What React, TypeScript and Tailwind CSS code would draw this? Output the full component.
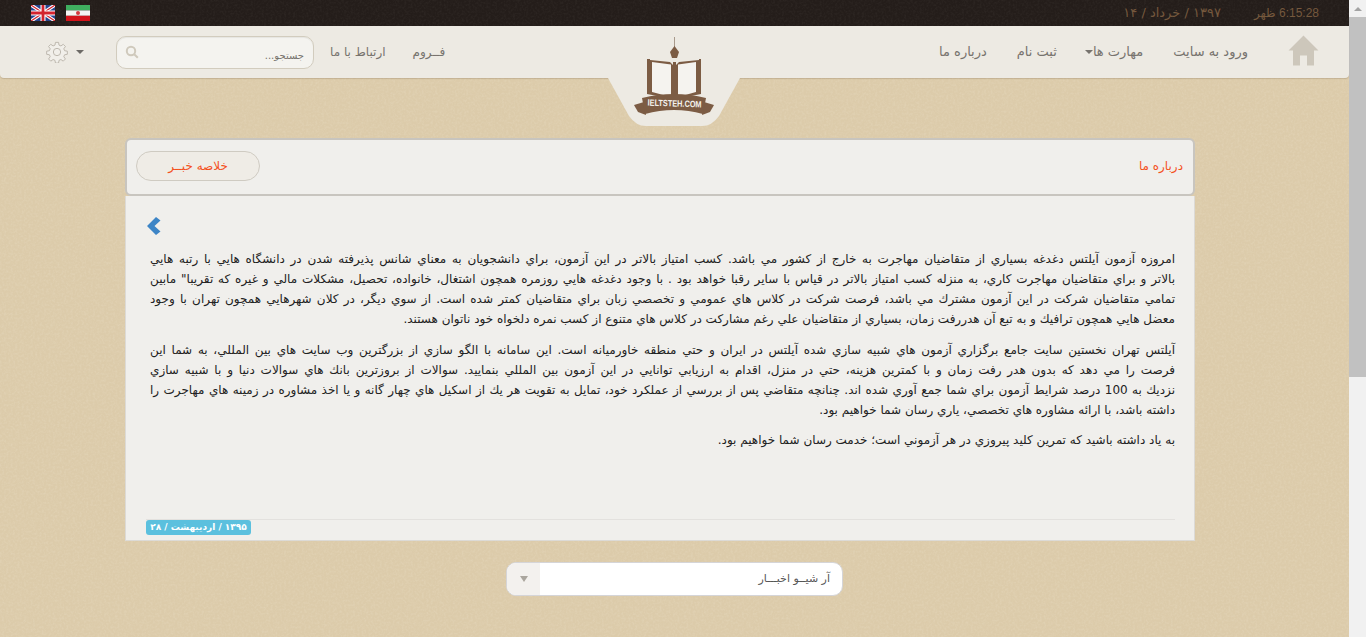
const paragraphs = [
  [
    "امروزه آزمون آیلتس دغدغه بسیاري از متقاضیان مهاجرت به خارج از کشور مي باشد. کسب امتیاز بالاتر در این آزمون، براي دانشجویان به معناي شانس پذیرفته شدن در دانشگاه هایي با رتبه هایي",
    "بالاتر و براي متقاضیان مهاجرت کاري، به منزله کسب امتیاز بالاتر در قیاس با سایر رقبا خواهد بود . با وجود دغدغه هایي روزمره همچون اشتغال، خانواده، تحصیل، مشکلات مالي و غیره که تقریبا\" مابین",
    "تمامي متقاضیان شرکت در این آزمون مشترك مي باشد، فرصت شرکت در کلاس هاي عمومي و تخصصي زبان براي متقاضیان کمتر شده است. از سوي دیگر، در کلان شهرهایي همچون تهران با وجود",
    "معضل هایي همچون ترافیك و به تبع آن هدررفت زمان، بسیاري از متقاضیان علي رغم مشارکت در کلاس هاي متنوع از کسب نمره دلخواه خود ناتوان هستند.",
  ],
  [
    "آیلتس تهران نخستین سایت جامع برگزاري آزمون هاي شبیه سازي شده آیلتس در ایران و حتي منطقه خاورمیانه است. این سامانه با الگو سازي از بزرگترین وب سایت هاي بین المللي، به شما این",
    "فرصت را مي دهد که بدون هدر رفت زمان و با کمترین هزینه، حتي در منزل، اقدام به ارزیابي توانایي در این آزمون بین المللي بنمایید. سوالات از بروزترین بانك هاي سوالات دنیا و با شبیه سازي",
    "نزدیك به 100 درصد شرایط آزمون براي شما جمع آوري شده اند. چنانچه متقاضي پس از بررسي از عملکرد خود، تمایل به تقویت هر یك از اسکیل هاي چهار گانه و یا اخذ مشاوره در زمینه هاي مهاجرت را",
    "داشته باشد، با ارائه مشاوره هاي تخصصي، یاري رسان شما خواهیم بود.",
  ],
  ["به یاد داشته باشید که تمرین کلید پیروزي در هر آزموني است؛ خدمت رسان شما خواهیم بود."],
];

const font = "font-['DejaVu_Sans',sans-serif]";

// leathery speckle over the page background and the top bar
function Grain({ id, opacity }: { id: string; opacity: number }) {
  return (
    <svg className="pointer-events-none absolute inset-0 h-full w-full" aria-hidden="true">
      <filter id={id}>
        <feTurbulence type="fractalNoise" baseFrequency="0.45" numOctaves="2" seed="4" />
        <feColorMatrix values="0 0 0 0 1  0 0 0 0 0.97  0 0 0 0 0.88  1.6 0 0 0 -0.62" />
      </filter>
      <rect width="100%" height="100%" filter={`url(#${id})`} opacity={opacity} />
    </svg>
  );
}

function UkFlag() {
  return (
    <svg width="24" height="16" viewBox="0 0 24 16">
      <rect width="24" height="16" fill="#27458f" />
      <path d="M0 0L24 16M24 0L0 16" stroke="#fff" strokeWidth="3.4" />
      <path d="M0 0L24 16M24 0L0 16" stroke="#d3232e" strokeWidth="1.2" />
      <path d="M12 0V16M0 8H24" stroke="#fff" strokeWidth="5" />
      <path d="M12 0V16M0 8H24" stroke="#d3232e" strokeWidth="2.8" />
    </svg>
  );
}

function IranFlag() {
  return (
    <svg width="24" height="16" viewBox="0 0 24 16">
      <rect width="24" height="5.4" fill="#3fae5f" />
      <rect y="5.4" width="24" height="5.4" fill="#f4f4f2" />
      <rect y="10.8" width="24" height="5.2" fill="#d3141c" />
      <circle cx="12" cy="8" r="2" fill="#d3383f" />
    </svg>
  );
}

function HomeIcon() {
  return (
    <svg width="31" height="31" viewBox="0 0 31 31" fill="#cdc7bb">
      <path d="M15.5 0.5L30.5 15.5H26V30.5H19V20.5H12V30.5H5V15.5H0.5Z" />
    </svg>
  );
}

function GearIcon() {
  return (
    <svg width="22" height="22" viewBox="0 0 24 24" fill="#f1efea" stroke="#b9b4aa" strokeWidth="1">
      <path d="M10.3 1.5h3.4l.5 3 2.1.9 2.5-1.8 2.4 2.4-1.8 2.5.9 2.1 3 .5v3.4l-3 .5-.9 2.1 1.8 2.5-2.4 2.4-2.5-1.8-2.1.9-.5 3h-3.4l-.5-3-2.1-.9-2.5 1.8-2.4-2.4 1.8-2.5-.9-2.1-3-.5v-3.4l3-.5.9-2.1-1.8-2.5 2.4-2.4 2.5 1.8 2.1-.9z" />
      <circle cx="12" cy="12" r="4" />
    </svg>
  );
}

function SearchIcon() {
  return (
    <svg width="14" height="14" viewBox="0 0 14 14" fill="none" stroke="#cfc9bc" strokeWidth="2">
      <circle cx="6" cy="6" r="4.2" />
      <path d="M9.2 9.2L12.8 12.8" />
    </svg>
  );
}

// tab under the nav bar with the book logo
function LogoTab() {
  return (
    <svg className="absolute left-[600px] top-[26px]" width="150" height="102" viewBox="0 0 150 102">
      <path d="M8 52H140L119 90Q112 100 102 100H46Q36 100 29 90Z" fill="#edeae3" />
      <path d="M74.500 11V22" stroke="#a89a8c" strokeWidth="1" />
      <path d="M74.500 20L79 26L77 32H72L70 26Z" fill="#7c5c44" />
      <path d="M47 33H50V34L70 36L73 39V36H76V39L79 36L99 34V33H101V68L76 73H73L47 68Z" fill="#7c5c44" />
      <path d="M52 36L71 38.500V71L52 66Z" fill="#f5f3ef" />
      <path d="M78 38.500L96 36V66L78 71Z" fill="#f5f3ef" />
      <path d="M34 79L44 76L46 89L38 86Z" fill="#7c5c44" />
      <path d="M114 79L104 76L102 89L110 86Z" fill="#7c5c44" />
      <path d="M42 72Q74 64 106 72L103 88Q74 80 45 88Z" fill="#7c5c44" />
      <text x="74.500" y="80.500" textAnchor="middle" textLength="54" lengthAdjust="spacingAndGlyphs" fontSize="9" fontWeight="700" fill="#f5f3ef" fontFamily="'Liberation Sans',sans-serif" transform="rotate(2 74 80)">
        IELTSTEH.COM
      </text>
    </svg>
  );
}

export default function App() {
  return (
    <div dir="ltr" className={`flex h-[637px] w-[1366px] overflow-hidden bg-[#dccbaa] ${font}`}>
      <main className="relative flex w-[1349px] flex-col">
        <Grain id="page-grain" opacity={0.16} />
        <div className="relative flex h-[26px] items-center justify-between bg-[#241d1a] pl-[31px] pr-[30px]">
          <Grain id="bar-grain" opacity={0.05} />
          <div className="relative flex items-center gap-[11px]">
            <UkFlag />
            <IranFlag />
          </div>
          <div dir="rtl" className="relative flex items-center gap-[33px] text-[13px] text-[#75583d]">
            <span className="font-['Liberation_Sans','DejaVu_Sans',sans-serif] text-[12px]">6:15:28 ظهر</span>
            <span>۱۳۹۷ / خرداد / ۱۴</span>
          </div>
        </div>

        <nav className="relative flex h-[52px] items-center justify-between rounded-b-[4px] bg-[#edeae3] pl-[46px] pr-[30px] shadow-[0_1px_1px_rgba(120,100,70,0.25)]">
          <div className="flex items-center text-[12px] text-[#77736e]">
            <GearIcon />
            <span className="ml-[8px] h-0 w-0 border-x-4 border-t-4 border-x-transparent border-t-[#6d6a66]" />
            <div dir="rtl" className="ml-[32px] flex h-[33px] w-[198px] items-center justify-between rounded-[10px] border border-[#d2ccbe] bg-[#f4f3ef] pl-[8px] pr-[9px] shadow-[inset_0_1px_1px_rgba(0,0,0,0.06)]">
              <span className="mt-[7px] text-[10px] text-[#77736e]">جستجو...</span>
              <SearchIcon />
            </div>
            <span dir="rtl" className="ml-[16px]">ارتباط با ما</span>
            <span dir="rtl" className="ml-[27px]">فــروم</span>
          </div>
          <div className="flex items-center text-[13px] text-[#77736e]">
            <span dir="rtl">درباره ما</span>
            <span dir="rtl" className="ml-[30px]">ثبت نام</span>
            <span className="ml-[28px] flex items-center">
              <span className="h-0 w-0 border-x-4 border-t-4 border-x-transparent border-t-[#77736e]" />
              <span dir="rtl">مهارت ها</span>
            </span>
            <span dir="rtl" className="ml-[30px]">ورود به سایت</span>
            <span className="mb-[3px] ml-[40px]">
              <HomeIcon />
            </span>
          </div>
        </nav>
        <LogoTab />

        <section className="relative ml-[125px] mt-[60px] w-[1070px]">
          <header className="flex h-[58px] items-center justify-between rounded-[6px] border-2 border-[#c8c5bf] bg-[#f0efec] pl-[9px] pr-[10px]">
            <button className="mb-[2px] h-[30px] w-[124px] rounded-full border border-[#cfcbc2] bg-[#efece6] text-[12px] text-[#f4511e]">
              خلاصه خبــر
            </button>
            <h1 dir="rtl" className="mb-[2px] text-[12px] font-normal text-[#f4511e]">درباره ما</h1>
          </header>
          <div className="flex h-[345px] flex-col border-x border-b border-[#dcdad6] bg-[#f0efec] pb-[5px] pl-5 pr-[19px]">
            <svg className="ml-[1px] mt-[21px] shrink-0" width="14" height="18" viewBox="0 0 14 18" fill="#3d85c6">
              <path d="M9 0L13.500 3.500L7.500 9L13.500 14.500L9 18L0 9Z" />
            </svg>
            <article dir="rtl" className="mt-[14px] flex-1 pl-[4px] text-[12px] leading-[20px] text-[#222]">
              {paragraphs.map((lines, i) => (
                <p key={i} className="mb-[10px] first:mb-[11px]">
                  {lines.map((line, j) => (
                    <span
                      key={j}
                      className={`block whitespace-nowrap ${j < lines.length - 1 ? "[text-align-last:justify]" : ""}`}
                    >
                      {line}
                    </span>
                  ))}
                </p>
              ))}
            </article>
            <div className="border-t border-[#e3e1de]">
              <span dir="rtl" className="block w-[105px] whitespace-nowrap rounded-[3px] bg-[#5bc0de] text-center text-[9px] font-bold leading-[15px] text-white">
                ۱۳۹۵ / اردیبهشت / ۲۸
              </span>
            </div>
          </div>
        </section>

        <div className="relative ml-[506px] mt-[21px] flex h-[34px] w-[337px] items-center overflow-hidden rounded-[10px] border border-[#d5d5d8] bg-white">
          <span className="flex h-full w-[33px] items-center justify-center bg-[#f3f1ee]">
            <span className="h-0 w-0 border-x-[4px] border-t-[6px] border-x-transparent border-t-[#aaa69e]" />
          </span>
          <span dir="rtl" className="flex-1 pr-[12px] pt-[1px] text-right text-[11px] text-[#555]">آر شیــو اخبـــار</span>
        </div>
      </main>

      <aside className="flex w-[17px] flex-col bg-[#f1f1f1]">
        <div className="flex h-[17px] items-center justify-center">
          <span className="h-0 w-0 border-x-4 border-b-4 border-x-transparent border-b-[#a3a3a3]" />
        </div>
        <div className="h-[360px] bg-[#c1c1c1]" />
      </aside>
    </div>
  );
}
